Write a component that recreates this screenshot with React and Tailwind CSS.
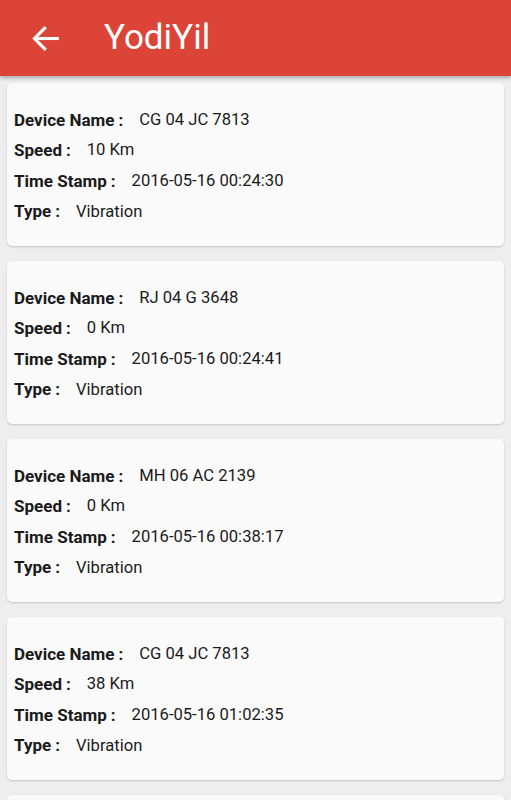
import React from "react";

const rows = [
  { name: "CG 04 JC 7813", speed: "10 Km", ts: "2016-05-16 00:24:30", type: "Vibration" },
  { name: "RJ 04 G 3648", speed: "0 Km", ts: "2016-05-16 00:24:41", type: "Vibration" },
  { name: "MH 06 AC 2139", speed: "0 Km", ts: "2016-05-16 00:38:17", type: "Vibration" },
  { name: "CG 04 JC 7813", speed: "38 Km", ts: "2016-05-16 01:02:35", type: "Vibration" },
];

function Line({ label, value }) {
  return (
    <div className="flex items-center h-[30.6px] text-[#1a1a1a]">
      <span className="font-bold text-[17px]">{label}<span className="ml-[4px]">:</span></span>
      <span className="ml-[16px] text-[16.6px]">{value}</span>
    </div>
  );
}

export default function App() {
  return (
    <div className="w-[511px] h-[800px] overflow-hidden bg-[#eeeeee]" style={{ fontFamily: "Roboto, 'Liberation Sans', sans-serif" }}>
      <div className="relative z-10 h-[76px] bg-[#db4437] flex items-center shadow-[0_2px_4px_rgba(0,0,0,0.3)]">
        <svg className="ml-[28px] mt-[1px]" width="37" height="37" viewBox="0 0 24 24" fill="none" stroke="white" strokeWidth="2" strokeLinecap="butt">
          <path d="M20 12H4.8" />
          <path d="M11.5 4.6L4.2 12l7.3 7.4" />
        </svg>
        <div className="ml-[39px] text-white text-[35px] leading-none mb-[2px]">YodiYil</div>
      </div>
      <div className="flex flex-col gap-[15px] pt-[7px] px-[7px]">
        {rows.map((r, i) => (
          <div key={i} className="h-[163px] shrink-0 bg-[#fafafa] rounded-[5px] shadow-[0_1px_2px_rgba(0,0,0,0.18)] pl-[7px] pt-[22px]">
            <Line label="Device Name" value={r.name} />
            <Line label="Speed" value={r.speed} />
            <Line label="Time Stamp" value={r.ts} />
            <Line label="Type" value={r.type} />
          </div>
        ))}
        <div className="h-[163px] shrink-0 bg-[#fafafa] rounded-[5px] shadow-[0_1px_2px_rgba(0,0,0,0.18)]" />
      </div>
    </div>
  );
}
